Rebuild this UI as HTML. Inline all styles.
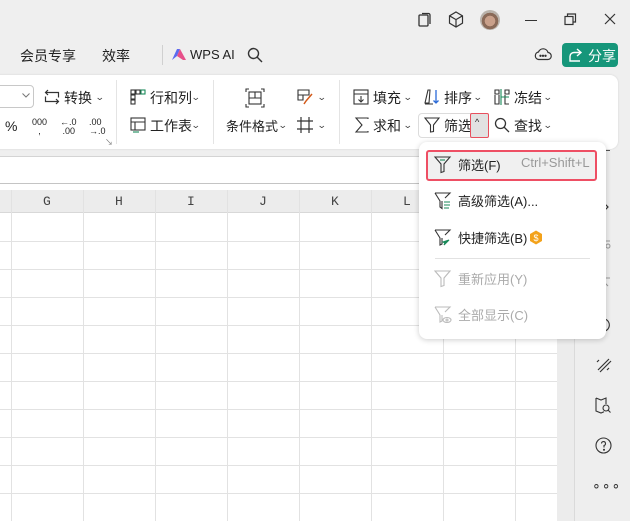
<!DOCTYPE html>
<html><head><meta charset="utf-8">
<style>
*{margin:0;padding:0;box-sizing:border-box}
body{width:630px;height:521px;overflow:hidden;background:#efefef;font-family:"Liberation Sans","Noto Sans CJK SC",sans-serif;color:#222;position:relative;font-size:13px}
.a{position:absolute}
.t14{font-size:14px}
.car{position:absolute;font-size:9px;color:#444;transform:scaleX(1.3)}
svg{position:absolute;overflow:visible}
.vl{position:absolute;width:1px;background:#e2e2e2}
.hl{position:absolute;height:1px;background:#e2e2e2}
</style></head><body>

<!-- title bar icons -->
<svg style="left:417px;top:12px" width="16" height="16" fill="none" stroke="#333" stroke-width="1.3"><rect x="2" y="3" width="9" height="11" rx="1"/><path d="M5 1.5h6.5a1.5 1.5 0 0 1 1.5 1.5v9"/></svg>
<svg style="left:448px;top:11px" width="16" height="17" fill="none" stroke="#333" stroke-width="1.2"><path d="M8 1l6.5 3.8v7.4L8 16 1.5 12.2V4.8z M1.5 4.8L8 8.6l6.5-3.8 M8 8.6V16"/></svg>
<div class="a" style="left:480px;top:10px;width:20px;height:20px;border-radius:50%;background:radial-gradient(circle at 50% 55%,#c9a08a 0 35%,#8a6a58 36% 55%,#b9b2aa 56%)"></div>
<div class="a" style="left:525px;top:20px;width:12px;height:1px;background:#333"></div>
<svg style="left:564px;top:13px" width="13" height="13" fill="none" stroke="#333" stroke-width="1.2"><rect x="1" y="3.5" width="8" height="8"/><path d="M3.5 3.5V1h8v8H9"/></svg>
<svg style="left:604px;top:13px" width="12" height="12" stroke="#333" stroke-width="1.2"><path d="M1 1l10 10M11 1L1 11"/></svg>

<!-- menu row -->
<div class="a t14" style="left:20px;top:46px">会员专享</div>
<div class="a t14" style="left:102px;top:46px">效率</div>
<div class="a" style="left:162px;top:45px;width:1px;height:20px;background:#d0d0d0"></div>
<svg style="left:171px;top:48px" width="16" height="13"><path d="M1 12L6 1h3l-3 7z" fill="#5b6cf0"/><path d="M6 8l3-7 6 11h-3z" fill="#e7508a"/></svg>
<div class="a" style="left:190px;top:47px;font-size:13px">WPS AI</div>
<svg style="left:247px;top:47px" width="16" height="16" fill="none" stroke="#333" stroke-width="1.4"><circle cx="6.5" cy="6.5" r="5"/><path d="M10 10l5 5"/></svg>
<svg style="left:534px;top:46px" width="18" height="16" fill="none" stroke="#333" stroke-width="1.2"><path d="M4.5 13.5h9a3.5 3.5 0 0 0 .5-7A5 5 0 0 0 4.5 6 3.8 3.8 0 0 0 4.5 13.5z"/><circle cx="6.5" cy="9.8" r=".6" fill="#333"/><circle cx="9" cy="9.8" r=".6" fill="#333"/><circle cx="11.5" cy="9.8" r=".6" fill="#333"/></svg>
<div class="a" style="left:562px;top:43px;width:56px;height:24px;background:#16967a;border-radius:4px;color:#fff;font-size:14px;padding:3px 0 0 26px">分享</div>
<svg style="left:568px;top:48px" width="16" height="14" fill="none" stroke="#fff" stroke-width="1.4"><path d="M9 1l4 3.5L9 8 M13 4.5H6a4 4 0 0 0-4 4V13h10"/></svg>

<!-- ribbon card -->
<div class="a" style="left:-4px;top:75px;width:622px;height:74px;background:#fff;border-radius:0 8px 8px 0;box-shadow:0 0 2px rgba(0,0,0,.12)"></div>
<div class="a" style="left:-6px;top:85px;width:40px;height:23px;border:1px solid #c8c8c8;border-radius:4px;background:#fff"></div>
<svg style="left:22px;top:93px" width="8" height="5" fill="none" stroke="#777"><path d="M.5.5l3.5 3.5L7.5.5"/></svg>
<svg style="left:44px;top:89px" width="16" height="16" fill="none" stroke="#333" stroke-width="1.2"><path d="M4 1L1.5 3.5 4 6 M1.5 3.5h13v5 M12 15l2.5-2.5L12 10 M14.5 12.5h-13v-5"/></svg>
<div class="a t14" style="left:64px;top:88px">转换</div><span class="car" style="left:96px;top:92px">⌄</span>
<div class="a" style="left:5px;top:118px;font-size:14px">%</div>
<div class="a" style="left:32px;top:118px;font-size:9px;line-height:9px;text-align:center">000<br>,</div>
<div class="a" style="left:60px;top:118px;font-size:9px;line-height:9px">←.0<br>&nbsp;.00</div>
<div class="a" style="left:89px;top:118px;font-size:9px;line-height:9px">.00<br>→.0</div>
<div class="a" style="left:105px;top:137px;font-size:8px;color:#777">↘</div>
<div class="a" style="left:116px;top:80px;width:1px;height:64px;background:#e4e4e4"></div>

<svg style="left:130px;top:89px" width="16" height="16" fill="none" stroke="#333" stroke-width="1.1"><rect x="1" y="1" width="4" height="4"/><rect x="6" y="1" width="4" height="4"/><rect x="11" y="1" width="4" height="4" stroke="#1a8a5a"/><rect x="1" y="6" width="4" height="4"/><rect x="1" y="11" width="4" height="4"/></svg>
<div class="a t14" style="left:150px;top:88px">行和列</div><span class="car" style="left:192px;top:92px">⌄</span>
<svg style="left:130px;top:117px" width="16" height="16" fill="none" stroke="#333" stroke-width="1.1"><rect x="1" y="1" width="14" height="12"/><path d="M1 5h14M5 5v8"/><path d="M3 15h6" stroke="#1a8a5a"/></svg>
<div class="a t14" style="left:150px;top:116px">工作表</div><span class="car" style="left:192px;top:120px">⌄</span>
<div class="a" style="left:213px;top:80px;width:1px;height:64px;background:#e4e4e4"></div>

<svg style="left:245px;top:88px" width="20" height="20" fill="none" stroke="#333" stroke-width="1.1"><path d="M1 4V1h3M16 1h3v3M19 16v3h-3M4 19H1v-3"/><rect x="4" y="4" width="12" height="12"/><path d="M4 10h12M10 4v6"/></svg>
<div class="a" style="left:226px;top:116px;font-size:13px">条件格式</div><span class="car" style="left:279px;top:120px">⌄</span>
<svg style="left:297px;top:89px" width="18" height="16" fill="none" stroke="#333" stroke-width="1.1"><path d="M1 1h11v5H6v5H1z M1 6h5"/><path d="M15 5l-6 7 M9 12l-2 3" stroke="#d35a1a" stroke-width="1.5"/></svg><span class="car" style="left:318px;top:92px">⌄</span>
<svg style="left:297px;top:117px" width="16" height="16" fill="none" stroke="#333" stroke-width="1.2"><path d="M4 0v16M12 0v16M0 4h16M0 12h16"/></svg><span class="car" style="left:318px;top:120px">⌄</span>
<div class="a" style="left:339px;top:80px;width:1px;height:64px;background:#e4e4e4"></div>

<svg style="left:353px;top:89px" width="16" height="16" fill="none" stroke="#333" stroke-width="1.1"><rect x="1" y="1" width="14" height="14"/><path d="M1 5h14M8 7v6M5.5 10.5L8 13l2.5-2.5"/></svg>
<div class="a t14" style="left:373px;top:88px">填充</div><span class="car" style="left:404px;top:92px">⌄</span>
<svg style="left:424px;top:89px" width="16" height="16" fill="none" stroke="#333" stroke-width="1.1"><path d="M1 14L4 1h2l-1 13z M1 15h8"/><path d="M12 1v13M9.5 11.5L12 14l2.5-2.5" stroke="#2a6ad8" stroke-width="1.3"/></svg>
<div class="a t14" style="left:444px;top:88px">排序</div><span class="car" style="left:474px;top:92px">⌄</span>
<svg style="left:494px;top:89px" width="16" height="16" fill="none" stroke="#333" stroke-width="1.1"><path d="M1 1h4v4H1zM1 6v9h4V6M11 1h4v4h-4zM11 6v9h4"/><path d="M7 0v16M7 8h8" stroke="#1a8a5a"/></svg>
<div class="a t14" style="left:514px;top:88px">冻结</div><span class="car" style="left:544px;top:92px">⌄</span>

<svg style="left:355px;top:117px" width="14" height="16" fill="none" stroke="#333" stroke-width="1.1"><path d="M13 2V1H1l6 7-6 7h12v-1"/></svg>
<div class="a t14" style="left:373px;top:116px">求和</div><span class="car" style="left:404px;top:120px">⌄</span>
<div class="a" style="left:418px;top:113px;width:71px;height:25px;border:1px solid #dcdcdc;border-radius:4px"></div>
<svg style="left:424px;top:117px" width="16" height="16" fill="none" stroke="#333" stroke-width="1.1"><path d="M1 1h14L9.5 8v6.5L6.5 15V8z"/></svg>
<div class="a t14" style="left:444px;top:116px">筛选</div>
<div class="a" style="left:470px;top:113px;width:19px;height:25px;border:1.5px solid #e8505e;border-radius:2px;background:#e2e2e2"></div>
<div class="a" style="left:475px;top:117px;font-size:9px">^</div>
<svg style="left:494px;top:117px" width="16" height="16" fill="none" stroke="#333" stroke-width="1.3"><circle cx="6.5" cy="6.5" r="5"/><path d="M10 10l5 5"/></svg>
<div class="a t14" style="left:514px;top:116px">查找</div><span class="car" style="left:544px;top:120px">⌄</span>

<!-- formula bar -->
<div class="a" style="left:0;top:156px;width:574px;height:28px;background:#fff;border-top:1px solid #d4d4d4;border-bottom:1px solid #c4c4c4"></div>
<!-- grid -->
<div class="a" style="left:0;top:184px;width:557px;height:337px;background:#fff"></div>
<div class="a" style="left:0;top:190px;width:557px;height:23px;background:#ececec;border-bottom:1px solid #d8d8d8"></div>
<div class="a" style="left:557px;top:184px;width:17px;height:337px;background:#ececec"></div>
<div class="a" style="left:574px;top:150px;width:56px;height:371px;background:#eeeeee;border-left:1px solid #dadada"></div>
<div class="vl" style="left:11px;top:190px;height:331px"></div>
<div class="vl" style="left:83px;top:190px;height:331px"></div>
<div class="vl" style="left:155px;top:190px;height:331px"></div>
<div class="vl" style="left:227px;top:190px;height:331px"></div>
<div class="vl" style="left:299px;top:190px;height:331px"></div>
<div class="vl" style="left:371px;top:190px;height:331px"></div>
<div class="vl" style="left:443px;top:190px;height:331px"></div>
<div class="vl" style="left:515px;top:190px;height:331px"></div>
<div class="hl" style="left:0;top:241px;width:557px"></div>
<div class="hl" style="left:0;top:269px;width:557px"></div>
<div class="hl" style="left:0;top:297px;width:557px"></div>
<div class="hl" style="left:0;top:325px;width:557px"></div>
<div class="hl" style="left:0;top:353px;width:557px"></div>
<div class="hl" style="left:0;top:381px;width:557px"></div>
<div class="hl" style="left:0;top:409px;width:557px"></div>
<div class="hl" style="left:0;top:437px;width:557px"></div>
<div class="hl" style="left:0;top:465px;width:557px"></div>
<div class="hl" style="left:0;top:493px;width:557px"></div>
<div class="a" style="top:194px;left:0;width:557px;font-family:'Liberation Mono',monospace;font-size:13px;color:#444">
<span class="a" style="left:43px">G</span><span class="a" style="left:115px">H</span><span class="a" style="left:187px">I</span><span class="a" style="left:259px">J</span><span class="a" style="left:331px">K</span><span class="a" style="left:403px">L</span></div>

<!-- sidebar icons (partially hidden behind menu) -->
<div class="a" style="left:598px;top:150px;width:12px;height:1px;background:#555"></div>
<svg style="left:598px;top:199px" width="12" height="16" fill="none" stroke="#333" stroke-width="1.2"><path d="M4 2l6 6-6 6"/></svg>
<svg style="left:598px;top:240px" width="12" height="12" fill="none" stroke="#999" stroke-width="1"><path d="M0 1h12M8 6a2 2 0 1 1 0 .1"/></svg>
<svg style="left:598px;top:277px" width="12" height="16" fill="none" stroke="#999" stroke-width="1"><path d="M0 1h12M7 15V6l3 3"/></svg>
<svg style="left:598px;top:317px" width="12" height="16" fill="none" stroke="#333" stroke-width="1.1"><path d="M3 2a6 6 0 0 1 4 12"/></svg>
<div class="a" style="left:592px;top:477px;font-size:14px;color:#333;letter-spacing:1px">∘∘∘</div>
<svg style="left:595px;top:437px" width="17" height="17" fill="none" stroke="#333" stroke-width="1.1"><circle cx="8.5" cy="8.5" r="7.5"/><path d="M6.5 6.5a2 2 0 1 1 2.5 2v2"/><circle cx="9" cy="12.8" r=".5" fill="#333"/></svg>
<svg style="left:595px;top:397px" width="17" height="17" fill="none" stroke="#333" stroke-width="1.1"><path d="M1 1l5 2 5-2v6M1 1v13l5 2 3-1.2"/><circle cx="11" cy="11" r="3"/><path d="M13 13l2.5 2.5"/></svg>
<svg style="left:595px;top:356px" width="17" height="17" fill="none" stroke="#333" stroke-width="1.2"><path d="M3 14L14 3M5 16l11-11M2 6l2-2M12 14l2-2"/></svg>

<!-- dropdown menu -->
<div class="a" style="left:419px;top:142px;width:187px;height:197px;background:#fff;border-radius:8px;box-shadow:0 1px 6px rgba(0,0,0,.2)"></div>
<div class="a" style="left:426px;top:150px;width:171px;height:31px;background:#f0f0f0;border:2px solid #ee4f64;border-radius:3px"></div>
<svg style="left:434px;top:156px" width="17" height="17" fill="none" stroke="#333" stroke-width="1.1"><path d="M1 1h15L10 8v7.5L7 16.5V8z"/><path d="M6 4h5" stroke="#1a8a5a"/></svg>
<div class="a" style="left:458px;top:155px;font-size:13px">筛选(F)</div>
<div class="a" style="left:521px;top:155px;font-size:13px;color:#999">Ctrl+Shift+L</div>
<svg style="left:434px;top:192px" width="17" height="18" fill="none" stroke="#333" stroke-width="1.1"><path d="M1 1h15L11 6 M8 9v7.5L6 15V9L1 1"/><path d="M10 10h6M10 13h6M10 16h5" stroke="#1a8a5a"/></svg>
<div class="a" style="left:458px;top:191px;font-size:13px">高级筛选(A)...</div>
<svg style="left:434px;top:229px" width="17" height="18" fill="none" stroke="#333" stroke-width="1.1"><path d="M1 1h15L11 6 M8 9v6L6 16V9L1 1"/><path d="M10 16l5-5-6 2 2 1z" fill="#1a8a5a" stroke="#1a8a5a"/></svg>
<div class="a" style="left:458px;top:228px;font-size:13px">快捷筛选(B)</div>
<svg style="left:529px;top:230px" width="14" height="15"><path d="M7 .5l6 3.5v7L7 14.5 1 11V4z" fill="#f3a21b"/><text x="7" y="11" font-size="9" fill="#fff" text-anchor="middle" font-family="Liberation Sans">$</text></svg>
<div class="a" style="left:435px;top:258px;width:155px;height:1px;background:#e2e2e2"></div>
<svg style="left:434px;top:270px" width="17" height="17" fill="none" stroke="#bbb" stroke-width="1.1"><path d="M1 1h15L10 8v7.5L7 16.5V8z"/></svg>
<div class="a" style="left:458px;top:269px;font-size:13px;color:#aaa">重新应用(Y)</div>
<svg style="left:434px;top:306px" width="18" height="18" fill="none" stroke="#bbb" stroke-width="1.1"><path d="M1 1h15L11 6 M8 9v6L6 16V9L1 1"/><ellipse cx="13" cy="14" rx="4" ry="2.5"/><circle cx="13" cy="14" r="1"/></svg>
<div class="a" style="left:458px;top:305px;font-size:13px;color:#aaa">全部显示(C)</div>
</body></html>
